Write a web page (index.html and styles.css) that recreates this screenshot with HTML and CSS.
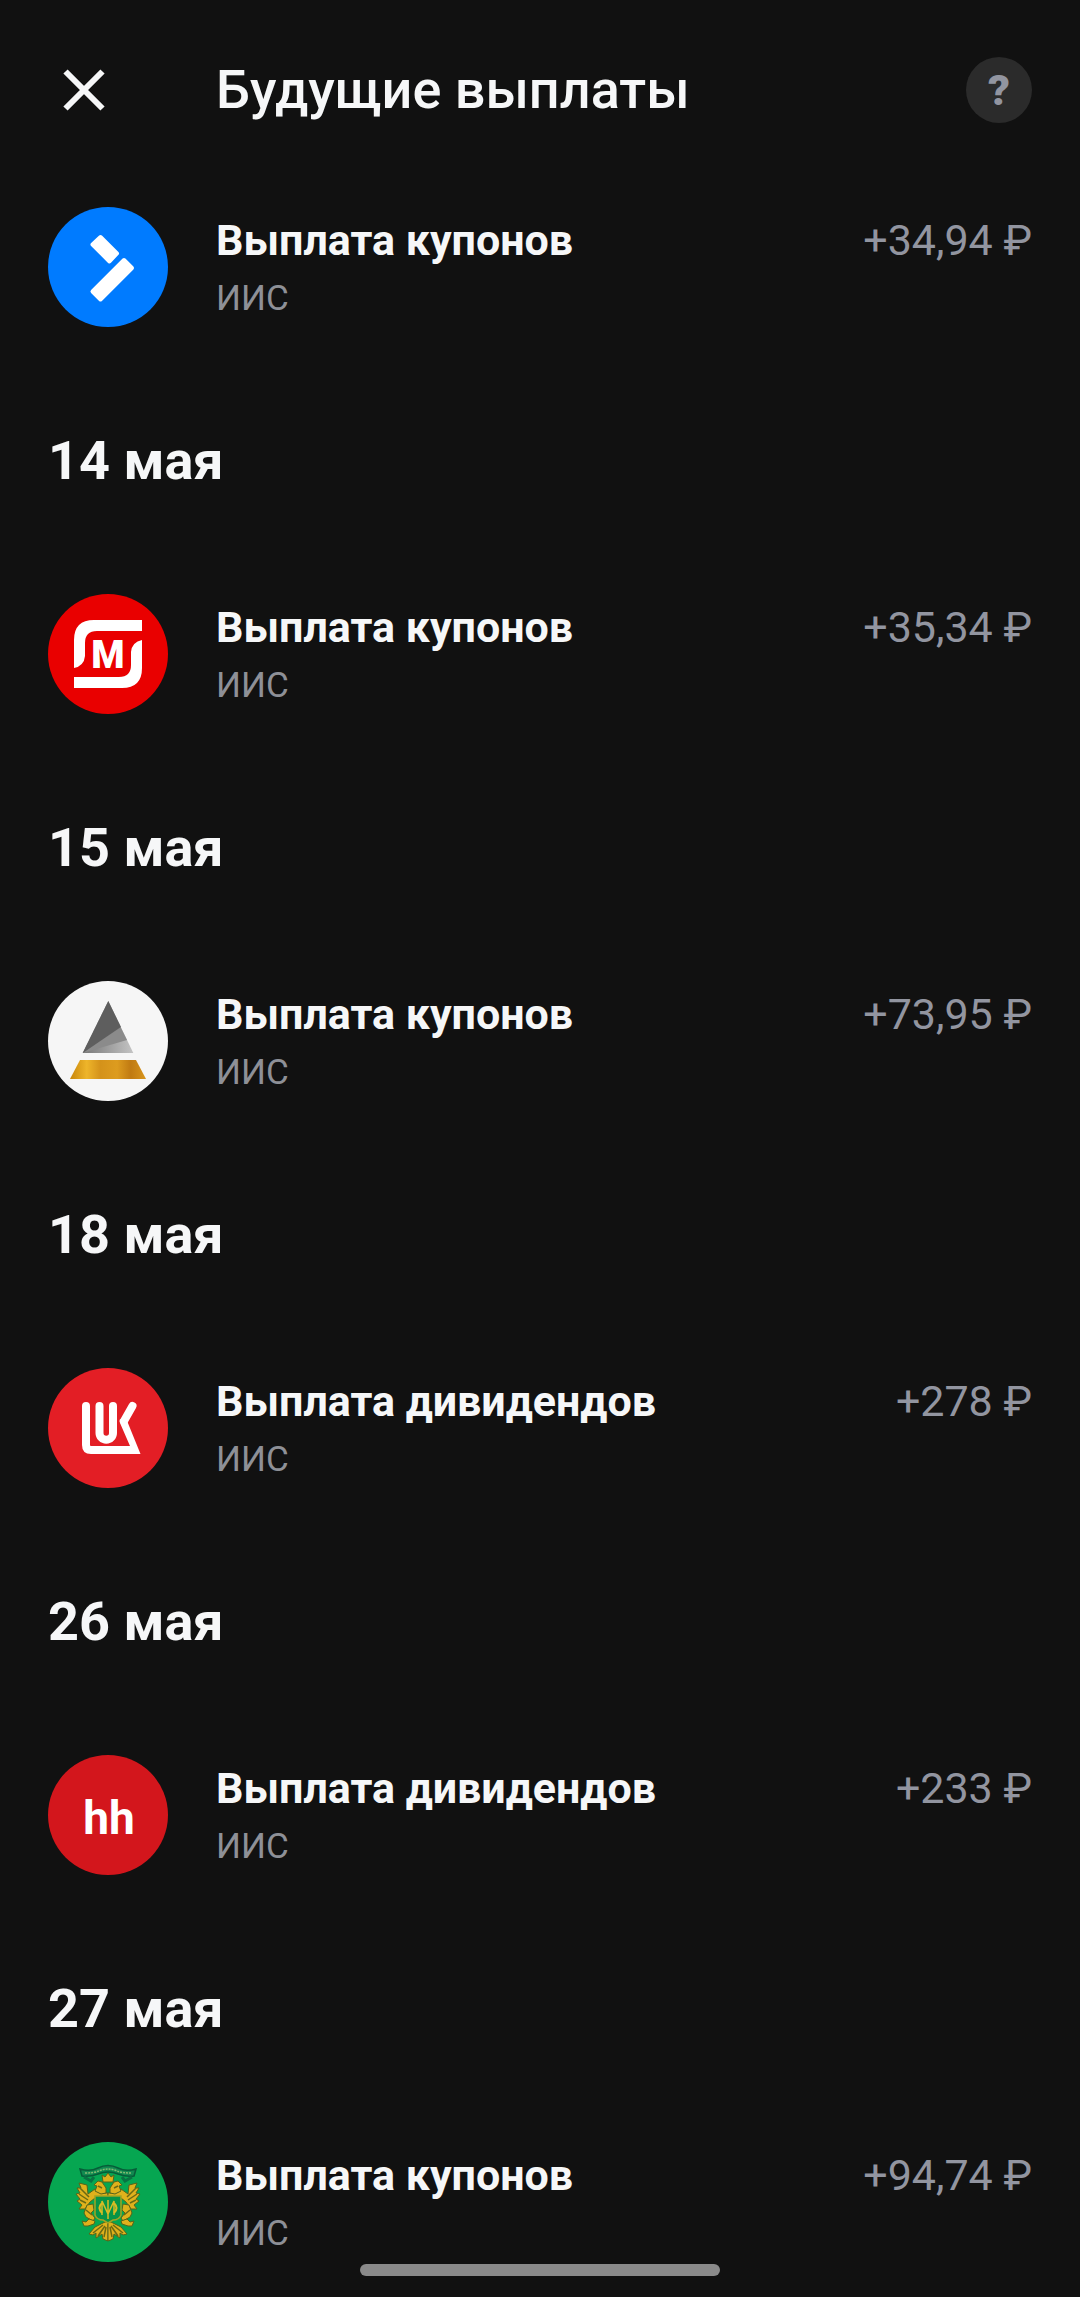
FILE: index.html
```html
<!DOCTYPE html>
<html lang="ru">
<head>
  <meta charset="utf-8">
  <meta name="viewport" content="width=device-width, initial-scale=1">
  <title>Будущие выплаты</title>
  <link rel="stylesheet" href="styles.css">
</head>

<body>

<header class="header">
  <button class="closeBtn" type="button" aria-label="Закрыть">
    <svg viewBox="0 0 42 42"><path d="M2.5 2.5L39.5 39.5M39.5 2.5L2.5 39.5"/></svg>
  </button>
  <h1 class="title">Будущие выплаты</h1>
  <button class="helpBtn" type="button" aria-label="Справка">?</button>
</header>

<main class="list">

  <div class="row">
    <svg class="logo" viewBox="0 0 120 120">
      <circle cx="60" cy="60" r="60" fill="#007bff"/>
      <g fill="#fff" stroke="#fff" stroke-width="4" stroke-linejoin="round">
        <path d="M52.5 30L69 46.500L61.500 54.500L44.500 37.500Z"/>
        <path d="M76 53L84 61L52.500 92.500L44.500 84.500Z"/>
      </g>
    </svg>
    <div class="info">
      <p class="name">Выплата купонов</p>
      <p class="account">ИИС</p>
    </div>
    <p class="amount">+34,94 ₽</p>
  </div>

  <h2 class="date">14 мая</h2>
  <div class="row">
    <svg class="logo" viewBox="0 0 120 120">
      <circle cx="60" cy="60" r="60" fill="#e90000"/>
      <g fill="#fff">
        <path d="M94 26V37H49Q37 37 37 49V62Q36 72 26 74V46Q26 26 46 26Z"/>
        <path d="M26 94V83H71Q83 83 83 71V58Q84 48 94 46V74Q94 94 74 94Z"/>
        <text class="logoText" x="60" y="74" font-size="38" font-weight="900">М</text>
      </g>
    </svg>
    <div class="info">
      <p class="name">Выплата купонов</p>
      <p class="account">ИИС</p>
    </div>
    <p class="amount">+35,34 ₽</p>
  </div>

  <h2 class="date">15 мая</h2>
  <div class="row">
    <svg class="logo" viewBox="0 0 120 120">
      <defs>
        <linearGradient id="gold">
          <stop offset="0" stop-color="#c8860c"/>
          <stop offset=".22" stop-color="#eeb52a"/>
          <stop offset=".4" stop-color="#d4921a"/>
          <stop offset=".62" stop-color="#dd9c1f"/>
          <stop offset=".8" stop-color="#c07a12"/>
          <stop offset="1" stop-color="#d8951c"/>
        </linearGradient>
        <linearGradient id="silver">
          <stop offset="0" stop-color="#777"/>
          <stop offset="1" stop-color="#c4c4c4"/>
        </linearGradient>
      </defs>
      <circle cx="60" cy="60" r="60" fill="#f6f6f6"/>
      <path d="M60.300 20L34.700 72H85.300Z" fill="url(#silver)"/>
      <path d="M34.700 72L72.500 46L79 59Z" fill="#8b8b8b"/>
      <path d="M60.300 20L34.700 72L73 46Z" fill="#5e5e5e"/>
      <path d="M32 79H88L98 98H22Z" fill="url(#gold)"/>
    </svg>
    <div class="info">
      <p class="name">Выплата купонов</p>
      <p class="account">ИИС</p>
    </div>
    <p class="amount">+73,95 ₽</p>
  </div>

  <h2 class="date">18 мая</h2>
  <div class="row">
    <svg class="logo" viewBox="0 0 120 120">
      <circle cx="60" cy="60" r="60" fill="#e31e25"/>
      <g fill="none" stroke="#fff" stroke-width="8" stroke-linecap="round">
        <path d="M38 38V77Q38 82 43 82H84"/>
        <path d="M51.500 38V65a6.750 6.750 0 0 0 13.500 0V38"/>
        <path d="M84.500 38L76 53" stroke-linejoin="round"/>
      </g>
      <path d="M72 51Q71 53 72 55L82 78H80V86H92.500L79.500 54Z" fill="#fff"/>
    </svg>
    <div class="info">
      <p class="name">Выплата дивидендов</p>
      <p class="account">ИИС</p>
    </div>
    <p class="amount">+278 ₽</p>
  </div>

  <h2 class="date">26 мая</h2>
  <div class="row">
    <svg class="logo" viewBox="0 0 120 120">
      <circle cx="60" cy="60" r="60" fill="#d3161c"/>
      <text class="logoText" x="61" y="79" font-size="46" font-weight="700" fill="#fff">hh</text>
    </svg>
    <div class="info">
      <p class="name">Выплата дивидендов</p>
      <p class="account">ИИС</p>
    </div>
    <p class="amount">+233 ₽</p>
  </div>

  <h2 class="date">27 мая</h2>
  <div class="row">
    <svg class="logo" viewBox="0 0 120 120">
      <defs>
        <!-- left half of the eagle, mirrored below -->
        <g id="eagleHalf">
          <path d="M39 43L31 41L33 46L29 46L32 51L28 52L32 57L29 59L34 63L31 67L37 67L42 60L47 56L60 55V51L52 51L47 47L40 52Z"/>
          <path d="M58 46L54 40L50 39L46 43L49 44L47 49L53 52L58 51Z"/>
          <path d="M39 63L45 62L46 68L43 71L47 76L45 79L38 75L36 71Z"/>
          <path d="M34 79L38 80L41 77L47 79L46 82L40 84L36 84Z"/>
          <path d="M57 80L47 85L41 92L45 93L48 91L48 96L54 92L55 97L60 99V80Z"/>
          <path d="M32 46L41 55M31 52L40 58M32 58L38 61M38 68L44 73M45 91L55 83M50 94L57 84M56 95L58 85M50 44L54 46" fill="none" stroke="#6b6a13" stroke-width="1.500"/>
        </g>
      </defs>
      <circle cx="60" cy="60" r="60" fill="#06a651"/>
      <path d="M32 27Q42 30 50 26Q60 21 70 26Q78 30 88 27L86 34Q78 35 70 32Q60 28 50 32Q42 35 34 34Z" fill="#118a50" stroke="#075c38" stroke-width="1.500"/>
      <path d="M37 31Q46 31 51 29Q60 25 69 29Q74 31 83 31" fill="none" stroke="#85ba71" stroke-width="1.500" stroke-dasharray="2 1"/>
      <path d="M36 35L43 39L46 35M84 35L77 39L74 35" fill="none" stroke="#087342" stroke-width="3"/>
      <g fill="#dfb11c" stroke="#56651a" stroke-width="1">
        <use href="#eagleHalf"/>
        <use href="#eagleHalf" transform="translate(120 0) scale(-1 1)"/>
        <path d="M54 33L57 35L60 31L63 35L66 33L65 40H55Z"/>
      </g>
      <path d="M47 54H73V73Q71 78 65 78L60 81L55 78Q49 78 47 73Z" fill="#079447" stroke="#a4a322" stroke-width="1.500"/>
      <path d="M54 73V59L60 72L66 59V73M60 58V77" fill="none" stroke="#d7bc24" stroke-width="1.500"/>
      <path d="M54 61q-5 5 0 10M66 61q5 5 0 10" fill="none" stroke="#d7bc24" stroke-width="2"/>
    </svg>
    <div class="info">
      <p class="name">Выплата купонов</p>
      <p class="account">ИИС</p>
    </div>
    <p class="amount">+94,74 ₽</p>
  </div>

</main>

<div class="homeBar"></div>

</body>
</html>
```
FILE: styles.css
```css
* {
  box-sizing: border-box;
}

body {
  margin: 0;
  background-color: #111111;
  color: #f6f7f8;
  font-family: Roboto, sans-serif;
}

h1, h2, p {
  margin: 0;
}

button {
  padding: 0;
  border: none;
  cursor: pointer;
}

.header {
  display: flex;
  align-items: center;
  height: 180px;
  padding: 0 48px;
}

.closeBtn {
  width: 72px;
  height: 72px;
  margin-right: 96px;
  background: none;
}

.closeBtn svg {
  display: block;
  width: 42px;
  height: 42px;
  margin: 0 auto;
  fill: none;
  stroke: #f6f7f8;
  stroke-width: 6px;
}

.title {
  flex: 1;
  font-size: 54px;
  line-height: 64px;
  font-weight: 500;
}

.helpBtn {
  width: 66px;
  height: 66px;
  border-radius: 50%;
  background-color: #2b2b2b;
  color: #9295a0;
  font-family: inherit;
  font-size: 43px;
  font-weight: 900;
}

.list {
  padding: 27px 48px 34px;
}

.row {
  display: flex;
  align-items: flex-start;
}

.logo {
  flex: none;
  width: 120px;
  height: 120px;
  margin-right: 48px;
}

.logoText {
  font-family: Roboto, sans-serif;
  text-anchor: middle;
}

.info {
  flex: 1;
  padding-top: 8px;
}

.name {
  font-size: 43px;
  line-height: 50px;
  font-weight: 700;
}

.account {
  margin-top: 13px;
  color: #8e9097;
  font-size: 35px;
  line-height: 42px;
}

.amount {
  padding-top: 8px;
  color: #9295a0;
  font-size: 43px;
  line-height: 50px;
  white-space: nowrap;
}

.date {
  padding: 102px 0 101px;
  font-size: 54px;
  line-height: 64px;
  font-weight: 700;
}

/* system gesture bar, stays above the list */
.homeBar {
  position: fixed;
  bottom: 21px;
  left: 0;
  right: 0;
  width: 33.33%;
  height: 12px;
  margin: 0 auto;
  border-radius: 6px;
  background-color: #8a8a8a;
}
```
